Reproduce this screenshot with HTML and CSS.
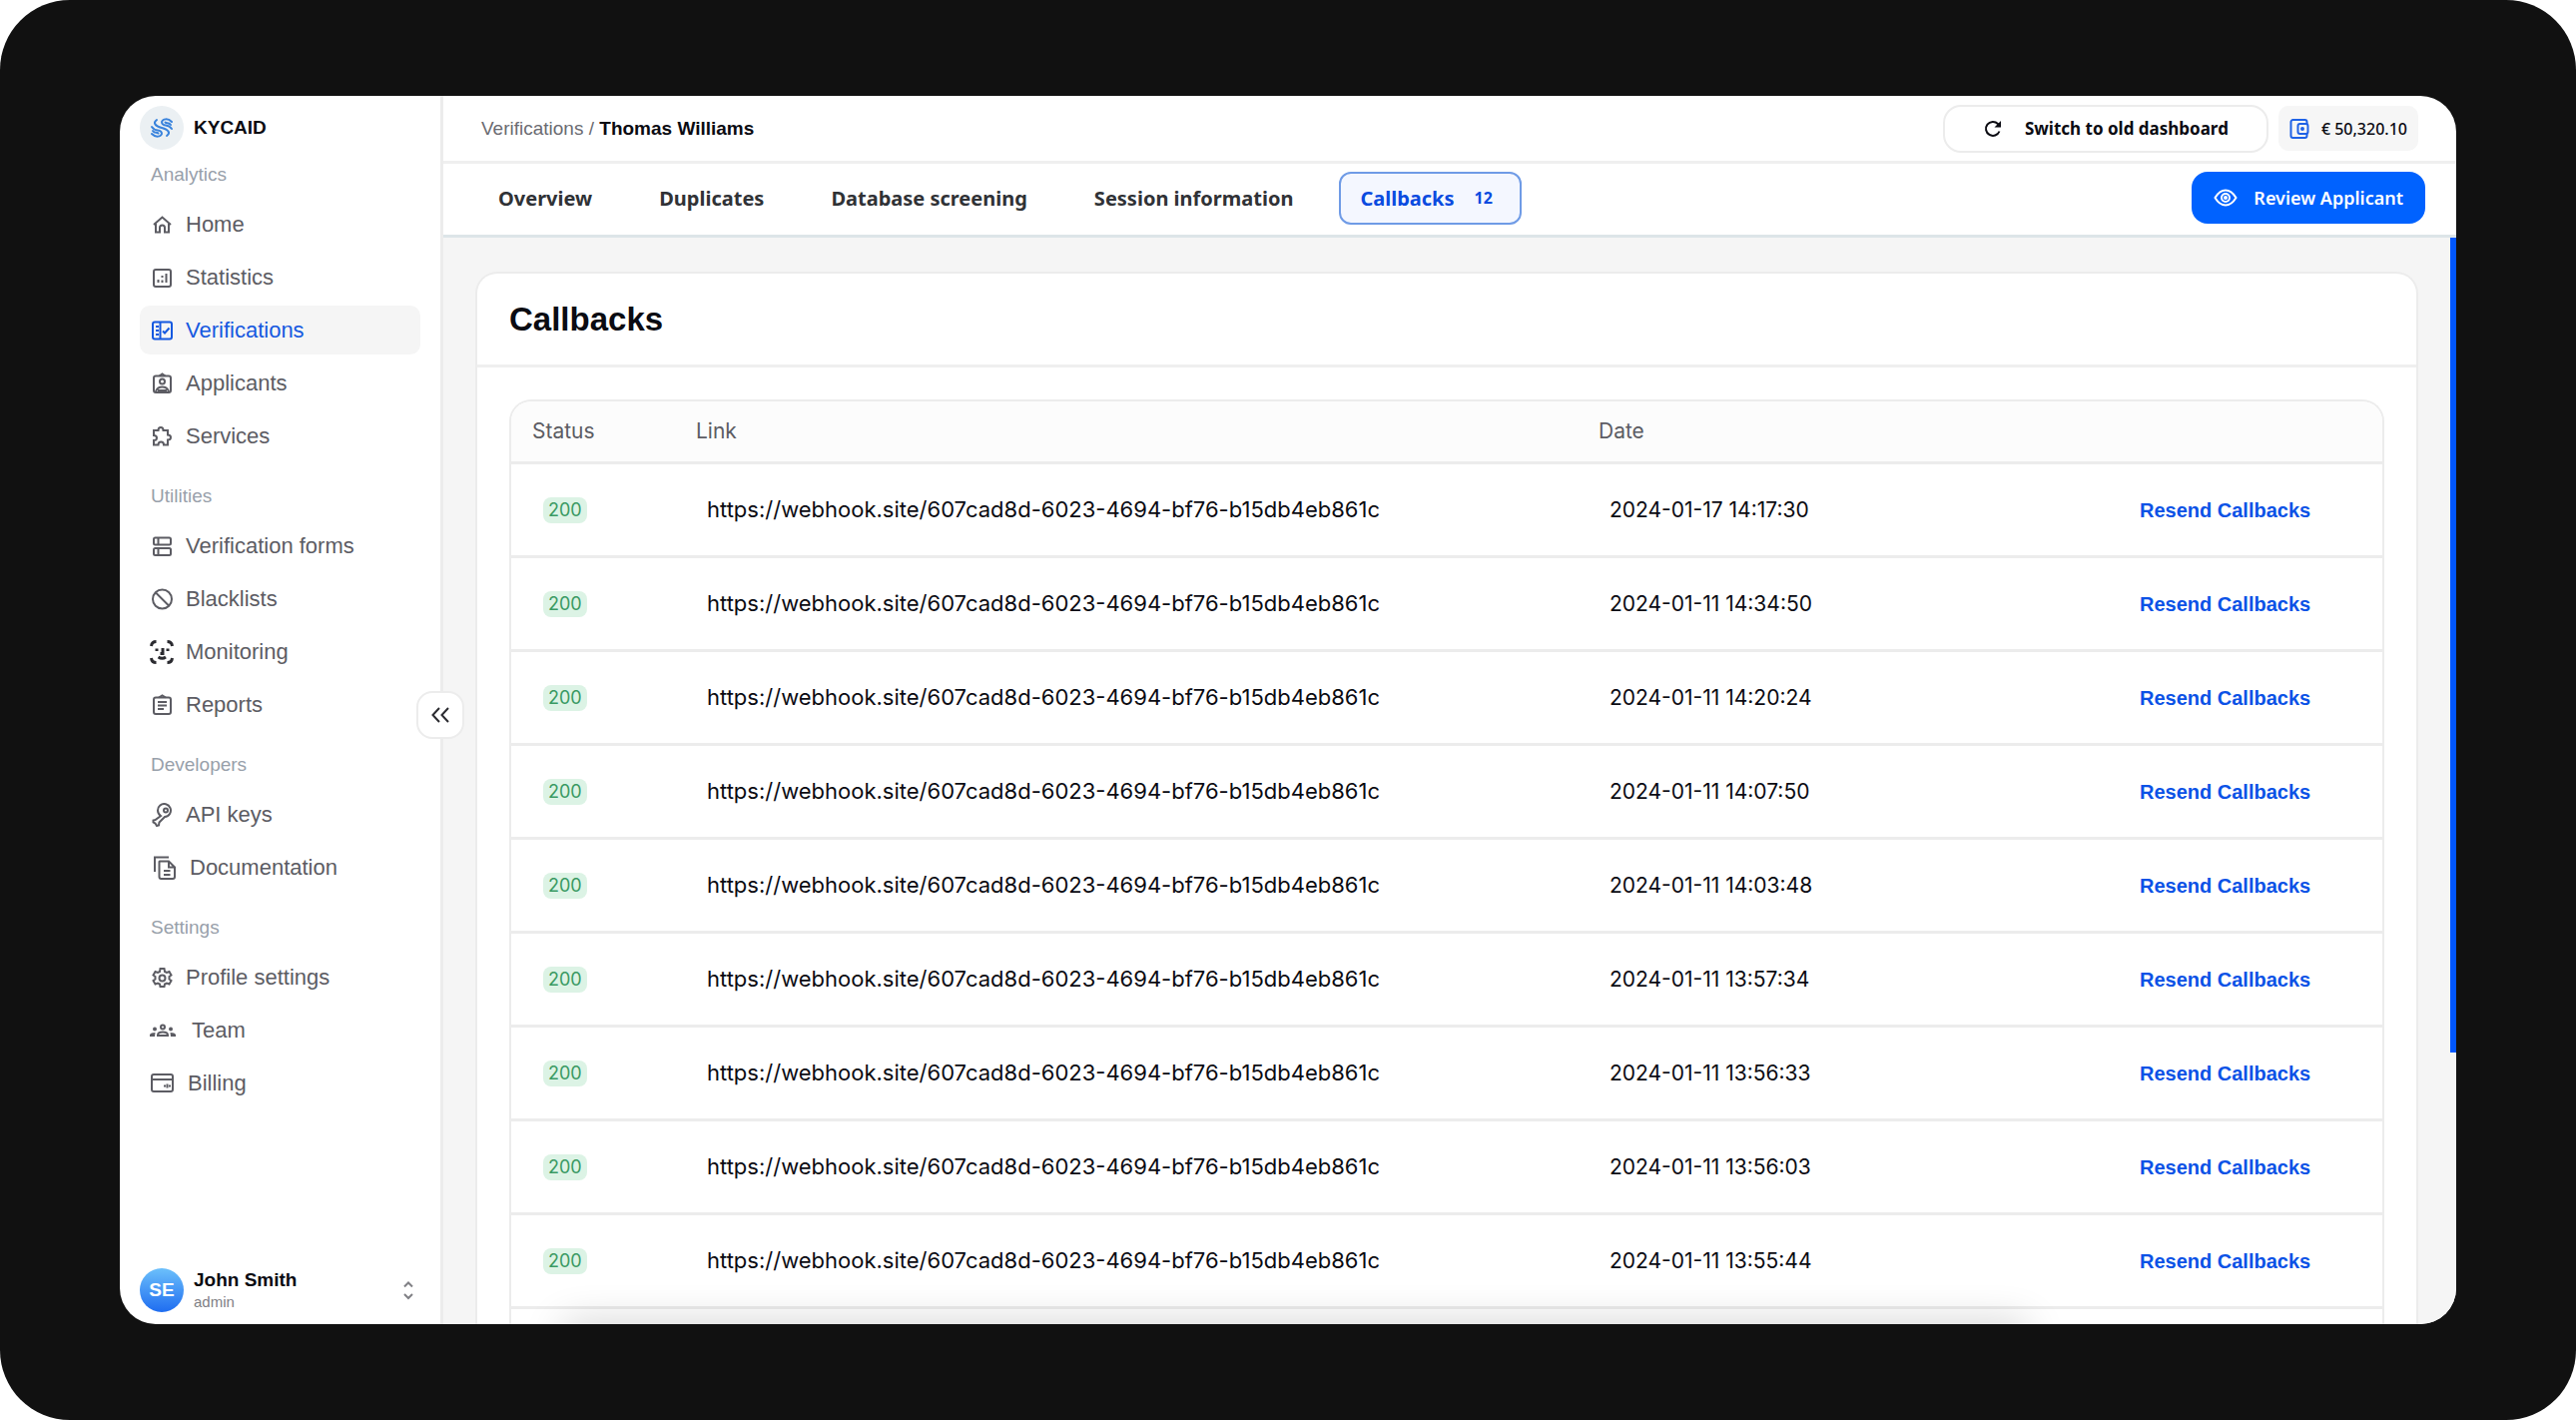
FILE: index.html
```html
<!doctype html>
<html lang="en">
<head>
	<meta charset="utf-8">
	<title>Callbacks - KYCAID</title>
	<link rel="stylesheet" href="styles.css">
</head>
<body>
	<div class="frame">
		<div class="app">

			<aside class="sidebar">
				<div class="brand">
					<span class="brand-logo">
						<svg width="24" height="20" viewBox="0 0 24 20">
							<path d="M7 2C3 5 5 8 12 10S21 15 17 18" />
							<path d="M22 4C18 0 13 1 12 4q0 3 4 3.500 4 .5 6 3.500" />
							<path d="M2 16C6 20 11 19 12 16q0-3-4-3.500-4-.5-6-3.500" />
							<path d="M3 13c2 3 4 1 5.500 2.500M21 7c-2-3-4-1-5.500-2.500" />
						</svg>
					</span>
					<span>KYCAID</span>
				</div>

				<nav class="menu">
					<div class="menu-group">
						<h3 class="menu-title">Analytics</h3>
						<a class="menu-item" href="#">
							<svg width="24" height="24" viewBox="0 0 24 24"><path d="M4 12 12.500 4.500 21 12M6 11v8.500h4V15a2.500 2.500 0 0 1 5 0v4.500h4V11" /></svg>
							Home
						</a>
						<a class="menu-item" href="#">
							<svg width="24" height="24" viewBox="0 0 24 24"><rect x="4" y="4" width="17" height="17" rx="2" /><path d="M8.500 14v3M12.500 14.500V17M12.500 10v2M16.500 8v9" /></svg>
							Statistics
						</a>
						<a class="menu-item active" href="#">
							<svg width="24" height="24" viewBox="0 0 24 24"><rect x="3" y="3.500" width="19" height="17" rx="2" /><path d="M6 8h3M6 12h3M6 16h3M10.500 4v16M13 12.500l2 2 4.500-5" /></svg>
							Verifications
						</a>
						<a class="menu-item" href="#">
							<svg width="24" height="24" viewBox="0 0 24 24"><rect x="4" y="4.500" width="17" height="16.500" rx="2" /><path d="M9.500 4.500 12.500 2.500l3 2M6 20c1-3 3-4.500 6.500-4.500S18 17 19 20" /><circle cx="12.500" cy="10" r="2.500" /><path d="M8 19h9" /></svg>
							Applicants
						</a>
						<a class="menu-item" href="#">
							<svg width="24" height="24" viewBox="0 0 24 24"><path d="M4 6h4.500c0-4 5-4 5 0H18v4.500c4 0 4 5 0 5V20.500h-4c0-4-5.500-4-5.500 0H4v-4.500c4 0 4-5 0-5z" /></svg>
							Services
						</a>
					</div>

					<div class="menu-group">
						<h3 class="menu-title">Utilities</h3>
						<a class="menu-item" href="#">
							<svg width="24" height="24" viewBox="0 0 24 24"><rect x="4" y="3.500" width="17" height="7" rx="1.500" /><rect x="4" y="14" width="17" height="7" rx="1.500" /><path d="M8.500 4v6M8.500 14.500v6" /></svg>
							Verification forms
						</a>
						<a class="menu-item" href="#">
							<svg width="24" height="24" viewBox="0 0 24 24"><circle cx="12.500" cy="12" r="9.500" /><path d="M6 5.500 19 18.500" /></svg>
							Blacklists
						</a>
						<a class="menu-item" href="#">
							<svg class="dark" width="24" height="24" viewBox="0 0 24 24"><path d="M1.500 6Q2 1.500 6.500 1.500M17.500 1.500q4.500 0 5 4.500M1.500 18Q2 22.500 6.500 22.500M17.500 22.500q4.500 0 5-4.500M7 8.500v2.500M18 8.500v2.500M13 8v5.500h-2.500M8.500 17q4 2.500 7.500 0" /></svg>
							Monitoring
						</a>
						<a class="menu-item" href="#">
							<svg width="24" height="24" viewBox="0 0 24 24"><rect x="4" y="4.500" width="17" height="16.500" rx="2" /><path d="M9 4.500 12.500 2.500l3.500 2M8 9h9M8 12.500h9M8 16h6" /></svg>
							Reports
						</a>
					</div>

					<div class="menu-group">
						<h3 class="menu-title">Developers</h3>
						<a class="menu-item" href="#">
							<svg width="24" height="24" viewBox="0 0 24 24"><path d="M11 13A6.500 6.500 0 1 1 15 14L9.500 19.500l-.5 3-2 .5-1.500-2.500-2-1v-2l2-.5z" /><circle cx="16" cy="7.500" r="2" /></svg>
							API keys
						</a>
						<a class="menu-item" href="#">
							<svg width="28" height="24" viewBox="0 0 28 24"><path d="M5 16V1.500h14M10 5.500h9l6 6V21a2 2 0 0 1-2 2H11.500a2 2 0 0 1-2-2V6zM19 6v5.500h5.500M14 15h6.500M14 19h6.500" /></svg>
							Documentation
						</a>
					</div>

					<div class="menu-group">
						<h3 class="menu-title">Settings</h3>
						<a class="menu-item" href="#">
							<svg width="24" height="24" viewBox="0 0 24 24"><path d="M10.500 3h4l.5 3 2 1 2.500-1 2 3.500-2 1.500v2.500l2 1.500-2 3.500-2.500-1-2 1-.5 2.500h-4l-.5-2.500-2-1-2.500 1-2-3.500 2-1.500V11l-2-1.500 2-3.500L8 7l2-1z" /><circle cx="12.500" cy="12.500" r="3" /></svg>
							Profile settings
						</a>
						<a class="menu-item" href="#">
							<svg width="30" height="24" viewBox="0 0 30 24"><circle cx="13" cy="8.500" r="2" /><path d="M8 17v-.5q0-3 5-3t5 3v.5z" /><path class="fill" d="M3 10.500a2 2 0 1 0 4 0 2 2 0 1 0-4 0M19 10.500a2 2 0 1 0 4 0 2 2 0 1 0-4 0M0 18V16q1-2 5.500-2L5 18zM26 18V16q-1-2-5.500-2l.5 4z" /></svg>
							Team
						</a>
						<a class="menu-item" href="#">
							<svg width="26" height="24" viewBox="0 0 26 24"><rect x="2" y="3" width="21" height="17" rx="2" /><path d="M2 8h21M14 14.500h2M17.500 12.500v4M19 14.500h2" /></svg>
							Billing
						</a>
					</div>
				</nav>

				<div class="profile">
					<span class="avatar">SE</span>
					<div class="profile-text">
						<div class="profile-name">John Smith</div>
						<div class="profile-role">admin</div>
					</div>
					<svg class="profile-arrows" width="12" height="20" viewBox="0 0 12 20"><path d="M2 6.500 6 2.500l4 4M2 14l4 4 4-4" /></svg>
				</div>

				<button class="collapse" type="button" aria-label="Collapse menu">
					<svg width="20" height="18" viewBox="0 0 20 18"><path d="M9 2 2.500 9 9 16M18 2l-6.500 7 6.500 7" /></svg>
				</button>
			</aside>

			<main class="main">
				<header class="topbar">
					<div class="breadcrumb"><a href="#">Verifications</a> / <b>Thomas Williams</b></div>
					<button class="switch" type="button">
						<svg width="20" height="20" viewBox="0 0 20 20"><path d="M16.500 12.500A7 7 0 1 1 15 5l2 2" /><path class="fill" d="M18 2v6.500h-6.500z" /></svg>
						Switch to old dashboard
					</button>
					<div class="balance">
						<svg width="20" height="22" viewBox="0 0 20 22"><path d="M17.500 6V4a2 2 0 0 0-2-2h-12a2 2 0 0 0-2 2v14a2 2 0 0 0 2 2h12a2 2 0 0 0 2-2v-2" /><rect x="8.500" y="6" width="10" height="10" rx="2" /><circle cx="13" cy="11" r="1" /></svg>
						€ 50,320.10
					</div>
				</header>

				<div class="tabs">
					<a class="tab" href="#">Overview</a>
					<a class="tab" href="#">Duplicates</a>
					<a class="tab" href="#">Database screening</a>
					<a class="tab" href="#">Session information</a>
					<a class="tab active" href="#">Callbacks <span class="count">12</span></a>
					<button class="review" type="button">
						<svg width="24" height="18" viewBox="0 0 24 18"><path d="M1.500 9Q6 1.500 12 1.500T22.500 9Q18 16.500 12 16.500T1.500 9z" /><circle cx="12" cy="9" r="4" /><circle cx="12" cy="9" r="1" /></svg>
						Review Applicant
					</button>
				</div>

				<div class="content">
					<section class="card">
						<h1 class="card-title">Callbacks</h1>
						<div class="card-body">
							<div class="table-box">
								<table class="table">
									<thead>
										<tr>
											<th class="col-status">Status</th>
											<th>Link</th>
											<th class="col-date">Date</th>
											<th class="col-action"></th>
										</tr>
									</thead>
									<tbody>
										<tr>
											<td><span class="badge">200</span></td>
											<td class="link">https://webhook.site/607cad8d-6023-4694-bf76-b15db4eb861c</td>
											<td>2024-01-17 14:17:30</td>
											<td><button class="resend" type="button">Resend Callbacks</button></td>
										</tr>
										<tr>
											<td><span class="badge">200</span></td>
											<td class="link">https://webhook.site/607cad8d-6023-4694-bf76-b15db4eb861c</td>
											<td>2024-01-11 14:34:50</td>
											<td><button class="resend" type="button">Resend Callbacks</button></td>
										</tr>
										<tr>
											<td><span class="badge">200</span></td>
											<td class="link">https://webhook.site/607cad8d-6023-4694-bf76-b15db4eb861c</td>
											<td>2024-01-11 14:20:24</td>
											<td><button class="resend" type="button">Resend Callbacks</button></td>
										</tr>
										<tr>
											<td><span class="badge">200</span></td>
											<td class="link">https://webhook.site/607cad8d-6023-4694-bf76-b15db4eb861c</td>
											<td>2024-01-11 14:07:50</td>
											<td><button class="resend" type="button">Resend Callbacks</button></td>
										</tr>
										<tr>
											<td><span class="badge">200</span></td>
											<td class="link">https://webhook.site/607cad8d-6023-4694-bf76-b15db4eb861c</td>
											<td>2024-01-11 14:03:48</td>
											<td><button class="resend" type="button">Resend Callbacks</button></td>
										</tr>
										<tr>
											<td><span class="badge">200</span></td>
											<td class="link">https://webhook.site/607cad8d-6023-4694-bf76-b15db4eb861c</td>
											<td>2024-01-11 13:57:34</td>
											<td><button class="resend" type="button">Resend Callbacks</button></td>
										</tr>
										<tr>
											<td><span class="badge">200</span></td>
											<td class="link">https://webhook.site/607cad8d-6023-4694-bf76-b15db4eb861c</td>
											<td>2024-01-11 13:56:33</td>
											<td><button class="resend" type="button">Resend Callbacks</button></td>
										</tr>
										<tr>
											<td><span class="badge">200</span></td>
											<td class="link">https://webhook.site/607cad8d-6023-4694-bf76-b15db4eb861c</td>
											<td>2024-01-11 13:56:03</td>
											<td><button class="resend" type="button">Resend Callbacks</button></td>
										</tr>
										<tr>
											<td><span class="badge">200</span></td>
											<td class="link">https://webhook.site/607cad8d-6023-4694-bf76-b15db4eb861c</td>
											<td>2024-01-11 13:55:44</td>
											<td><button class="resend" type="button">Resend Callbacks</button></td>
										</tr>
									</tbody>
								</table>
							</div>
						</div>
					</section>
					<div class="scroll-thumb"></div>
					<div class="bottom-shade"></div>
				</div>
			</main>

		</div>
	</div>
</body>
</html>
```
FILE: styles.css
```css
* {
	box-sizing: border-box;
}
body {
	margin: 0;
	background: #fff;
	font-family: "Liberation Sans", Arial, sans-serif;
	color: #0b0b12;
}
a {
	color: inherit;
	text-decoration: none;
}
button {
	font-family: inherit;
	cursor: pointer;
}
svg {
	flex: none;
	fill: none;
	stroke: currentColor;
	stroke-width: 2;
}
svg .fill {
	fill: currentColor;
	stroke: none;
}

.frame {
	height: 100vh;
	padding: 96px 120px;
	background: #111;
	border-radius: 70px;
}
.app {
	display: flex;
	height: 100%;
	background: #fff;
	border-radius: 36px;
	overflow: hidden;
}

/* sidebar */
.sidebar {
	position: relative;
	flex: none;
	display: flex;
	flex-direction: column;
	width: 324px;
	padding: 10px 20px 12px;
	border-right: 3px solid #ececec;
}
.brand {
	display: flex;
	align-items: center;
	gap: 10px;
	font-size: 19px;
	font-weight: bold;
}
.brand-logo {
	display: flex;
	align-items: center;
	justify-content: center;
	width: 44px;
	height: 44px;
	border-radius: 50%;
	background: #ebf0f3;
	color: #3a83dc;
}
.brand-logo svg {
	stroke-linecap: round;
}
.menu {
	flex: 1;
	display: flex;
	flex-direction: column;
	gap: 20px;
	padding-top: 9px;
}
.menu-group {
	display: flex;
	flex-direction: column;
	gap: 4px;
}
.menu-title {
	margin: 0 0 6px;
	padding-left: 11px;
	font-size: 19px;
	font-weight: normal;
	line-height: 31px;
	color: #98a0aa;
}
.menu-item {
	display: flex;
	align-items: center;
	gap: 12px;
	height: 49px;
	padding: 0 10px;
	border-radius: 10px;
	font-size: 22px;
	color: #5c5c63;
}
.menu-item .dark {
	color: #2b2b30;
	stroke-width: 3;
}
.menu-item.active {
	background: #f5f5f5;
	color: #1559e0;
}
.profile {
	display: flex;
	align-items: center;
	gap: 10px;
}
.avatar {
	display: flex;
	align-items: center;
	justify-content: center;
	width: 44px;
	height: 44px;
	border-radius: 50%;
	background: linear-gradient(#6cc0fb, #1f6df0);
	color: #fff;
	font-size: 19px;
	font-weight: bold;
}
.profile-text {
	flex: 1;
}
.profile-name {
	font-size: 19px;
	font-weight: bold;
	line-height: 24px;
}
.profile-role {
	font-size: 15px;
	line-height: 20px;
	color: #808085;
}
.profile-arrows {
	margin-right: 6px;
	color: #808085;
}
.collapse {
	position: absolute;
	z-index: 1;
	top: 596px;
	right: -24px;
	display: flex;
	align-items: center;
	justify-content: center;
	width: 48px;
	height: 48px;
	padding: 0;
	border: 2px solid #ececec;
	border-radius: 16px;
	background: #fff;
	color: #2b2b30;
}

/* top bars */
.main {
	flex: 1;
	min-width: 0;
	display: flex;
	flex-direction: column;
}
.topbar {
	flex: none;
	display: flex;
	align-items: center;
	gap: 10px;
	height: 68px;
	padding: 0 38px;
	border-bottom: 3px solid #efefef;
}
.breadcrumb {
	flex: 1;
	font-size: 19px;
	color: #6b6b72;
}
.breadcrumb b {
	color: #0b0b12;
}
.switch {
	display: flex;
	align-items: center;
	justify-content: center;
	gap: 22px;
	width: 326px;
	height: 48px;
	border: 2px solid #ececec;
	border-radius: 18px;
	background: #fff;
	color: #0b0b12;
	font-family: "Noto Sans", sans-serif;
	font-size: 17px;
	font-weight: bold;
}
.balance {
	display: flex;
	align-items: center;
	gap: 12px;
	height: 45px;
	padding: 0 11px;
	border-radius: 10px;
	background: #f6f6f6;
	font-family: "Noto Sans", sans-serif;
	font-size: 16px;
	font-weight: 500;
}
.balance svg {
	color: #1f62e6;
}
.tabs {
	flex: none;
	display: flex;
	align-items: center;
	gap: 25px;
	height: 74px;
	padding: 0 31px 3px 34px;
	border-bottom: 3px solid #dde5e8;
	font-family: "Noto Sans", sans-serif;
	font-size: 20px;
	font-weight: bold;
	color: #303236;
}
.tab {
	display: flex;
	align-items: center;
	gap: 20px;
	height: 53px;
	padding: 0 19px;
	border: 2px solid transparent;
	border-radius: 12px;
}
.tab.active {
	border-color: #6f9be6;
	background: #f4f7ff;
	color: #0a4be0;
}
.count {
	padding-right: 8px;
	font-size: 16px;
}
.review {
	display: flex;
	align-items: center;
	gap: 16px;
	height: 52px;
	margin-left: auto;
	padding: 0 22px;
	border: 0;
	border-radius: 16px;
	background: #0062ff;
	color: #fff;
	font-family: "Noto Sans", sans-serif;
	font-size: 18px;
	font-weight: 600;
}

/* callbacks */
.content {
	position: relative;
	flex: 1;
	min-height: 0;
	display: flex;
	padding: 34px 38px 0 32px;
	background: #f5f5f5;
	overflow: hidden;
}
.card {
	flex: 1;
	display: flex;
	flex-direction: column;
	border: 2px solid #ececec;
	border-bottom: 0;
	border-radius: 22px 22px 0 0;
	background: #fff;
}
.card-title {
	margin: 0;
	padding: 0 32px;
	border-bottom: 3px solid #efefef;
	font-size: 33px;
	line-height: 91px;
}
.card-body {
	flex: 1;
	display: flex;
	padding: 32px 32px 0;
}
.table-box {
	flex: 1;
	border: 2px solid #ececec;
	border-bottom: 0;
	border-radius: 22px 22px 0 0;
	overflow: hidden;
}
.table {
	width: 100%;
	border-collapse: collapse;
	table-layout: fixed;
	font-family: Inter, sans-serif;
	font-size: 21px;
}
.table th {
	height: 61px;
	padding: 0 21px;
	border-bottom: 3px solid #ececec;
	background: #fcfcfc;
	color: #5c5c63;
	font-weight: normal;
	text-align: left;
}
.table td {
	height: 94px;
	padding: 0 32px;
	border-bottom: 3px solid #ececec;
	white-space: nowrap;
}
.table .link {
	font-size: 22px;
}
.col-status {
	width: 164px;
}
.col-date {
	width: 531px;
}
.col-action {
	width: 275px;
}
.badge {
	display: inline-block;
	padding: 0 5px;
	border-radius: 8px;
	background: #dcf3e5;
	color: #3a9a63;
	font-size: 18px;
	line-height: 26px;
}
.resend {
	padding: 0;
	border: 0;
	background: none;
	color: #0b52e6;
	font-family: "Liberation Sans", Arial, sans-serif;
	font-size: 20px;
	font-weight: bold;
}
.scroll-thumb {
	position: absolute;
	top: 0;
	right: 0;
	width: 6px;
	height: 75%;
	background: #0057ff;
}
.bottom-shade {
	position: absolute;
	left: 120px;
	right: 430px;
	bottom: -30px;
	height: 30px;
	box-shadow: 0 0 40px rgba(0, 0, 0, 0.2);
}
```
